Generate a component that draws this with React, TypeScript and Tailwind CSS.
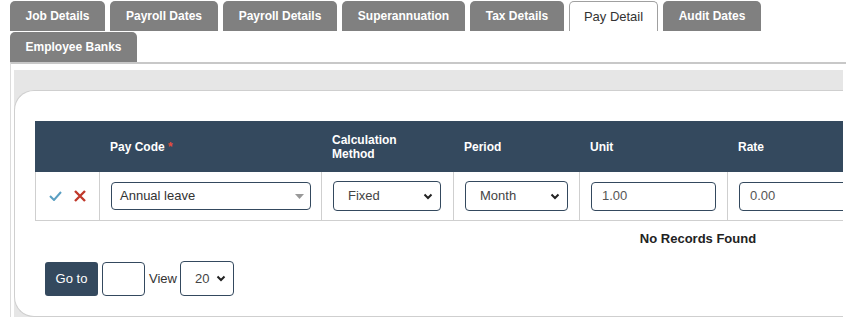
const tabs = [
  { label: "Job Details", w: "w-[95px]" },
  { label: "Payroll Dates", w: "w-[108px]" },
  { label: "Payroll Details", w: "w-[114px]" },
  { label: "Superannuation", w: "w-[123px]" },
  { label: "Tax Details", w: "w-[94px]" },
  { label: "Pay Detail", w: "w-[89px]", active: true },
  { label: "Audit Dates", w: "w-[98px]" },
  { label: "Employee Banks", w: "w-[127px]" },
];

function Chevron() {
  return (
    <svg width="10" height="7" viewBox="0 0 10 7" aria-hidden="true">
      <path d="M1.5 1.5l3.5 3.5 3.5-3.5" fill="none" stroke="#222" strokeWidth="2" />
    </svg>
  );
}

function SelectBox({ value, className }: { value: string; className: string }) {
  return (
    <div
      className={`flex items-center justify-between rounded-[4px] border border-[#34495e] bg-white pl-[14px] pr-[7px] text-[13px] text-[#444] ${className}`}
    >
      <span>{value}</span>
      <Chevron />
    </div>
  );
}

export default function App() {
  return (
    <div className="h-[321px] w-[846px] overflow-hidden bg-white font-['Liberation_Sans',Arial,sans-serif] text-[13px] text-[#333]">
      <div className="flex flex-wrap gap-x-[5px] gap-y-px pl-[10px] pt-px">
        {tabs.map((t) =>
          t.active ? (
            <div
              key={t.label}
              className={`flex h-[30px] items-center justify-center rounded-t-[5px] border border-b-0 border-[#a0a0a0] bg-white text-[13px] text-[#333] ${t.w}`}
            >
              {t.label}
            </div>
          ) : (
            <div
              key={t.label}
              className={`flex h-[30px] items-center justify-center rounded-t-[5px] bg-[#808080] text-[12px] font-bold text-white ${t.w}`}
            >
              {t.label}
            </div>
          )
        )}
      </div>

      <div className="ml-[10px] border-l border-t-2 border-l-[#dcdcdc] border-t-[#c8c8c8] pl-[3px] pr-[3px] pt-[6px]">
        <div className="bg-[#e6e6e6] pt-[20px]">
          <div className="rounded-bl-[20px] rounded-tl-[20px] border-b border-l border-t border-[#cfcfcf] bg-white pb-[20px] pl-[20px] pt-[30px]">
            <div className="w-[808px] overflow-hidden">
              <div className="w-[1326px]">
                <div className="flex h-[51px] items-center bg-[#34495e] text-[12px] font-bold leading-[14px] text-white">
                  <div className="w-[64px]" />
                  <div className="w-[222px] pl-[11px]">
                    Pay Code <span className="text-[#e74c3c]">*</span>
                  </div>
                  <div className="w-[132px] pl-[11px]">
                    Calculation
                    <br />
                    Method
                  </div>
                  <div className="w-[126px] pl-[11px]">Period</div>
                  <div className="w-[148px] pl-[11px]">Unit</div>
                  <div className="pl-[11px]">Rate</div>
                </div>

                <div className="flex h-[49px] border-b border-[#cfcfcf]">
                  <div className="flex w-[64px] items-center gap-[12px] border-l border-[#cfcfcf] pl-[13px]">
                    <svg width="13" height="10" viewBox="0 0 13 10" aria-hidden="true">
                      <path d="M1 5l4 4 7-8" fill="none" stroke="#5a9fc2" strokeWidth="2" />
                    </svg>
                    <svg width="12" height="12" viewBox="0 0 12 12" aria-hidden="true">
                      <path d="M1 1l10 10M11 1L1 11" fill="none" stroke="#c0392b" strokeWidth="2.4" />
                    </svg>
                  </div>
                  <div className="flex w-[222px] items-center border-l border-[#cfcfcf] pl-[11px] pr-[10px]">
                    <div className="flex h-[28px] w-full items-center justify-between rounded-[4px] border border-[#34495e] pl-[8px] pr-[6px] text-[13px] text-[#333]">
                      <span>Annual leave</span>
                      <svg width="9" height="5" viewBox="0 0 9 5" aria-hidden="true">
                        <path d="M0 0h9L4.5 5z" fill="#999" />
                      </svg>
                    </div>
                  </div>
                  <div className="flex w-[132px] items-center border-l border-[#cfcfcf] pl-[11px] pr-[12px]">
                    <SelectBox value="Fixed" className="h-[30px] w-full text-[#333]" />
                  </div>
                  <div className="flex w-[126px] items-center border-l border-[#cfcfcf] pl-[11px] pr-[11px]">
                    <SelectBox value="Month" className="h-[30px] w-full" />
                  </div>
                  <div className="flex w-[148px] items-center border-l border-[#cfcfcf] pl-[11px] pr-[11px]">
                    <div className="flex h-[29px] w-full items-center rounded-[4px] border border-[#34495e] pl-[10px] text-[13px] text-[#555]">
                      1.00
                    </div>
                  </div>
                  <div className="flex flex-1 items-center border-l border-[#cfcfcf] pl-[11px] pr-[11px]">
                    <div className="flex h-[29px] w-full items-center rounded-[4px] border border-[#34495e] pl-[10px] text-[13px] text-[#555]">
                      0.00
                    </div>
                  </div>
                </div>

                <div className="pt-[10px] text-center text-[13px] font-bold leading-[15px] text-[#222]">
                  No Records Found
                </div>
              </div>
            </div>

            <div className="mt-[15px] flex h-[35px] items-center pl-[10px]">
              <button className="h-[34px] w-[53px] rounded-[3px] bg-[#34495e] text-[13px] text-white">
                Go to
              </button>
              <div className="ml-[4px] h-[34px] w-[43px] rounded-[4px] border border-[#34495e]" />
              <span className="ml-[4px] text-[13px] text-[#333]">View</span>
              <SelectBox value="20" className="ml-[3px] h-[35px] w-[54px] pl-[12px] text-[#333]" />
            </div>
          </div>
        </div>
      </div>
    </div>
  );
}
